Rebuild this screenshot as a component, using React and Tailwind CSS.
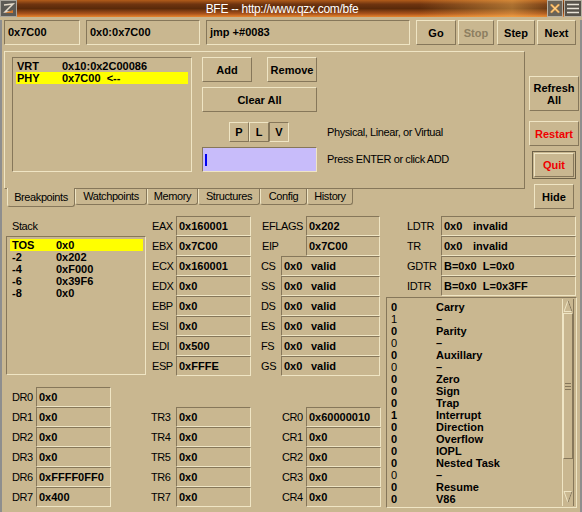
import React from 'react';

const sunken = 'border border-t-[#86775a] border-l-[#86775a] border-b-[#efe5c4] border-r-[#efe5c4]';
const raised = 'border border-t-[#efe5c4] border-l-[#efe5c4] border-b-[#86775a] border-r-[#86775a]';

const Btn = ({ className = '', children }) => (
    <div className={`${raised} flex items-center justify-center text-center font-bold text-[11px] leading-[12px] ${className}`}>
        {children}
    </div>
);

const RegRow = ({ label, value, extra, labelW, boxW, wide = 'w-[27px]' }) => (
    <div className="flex h-[20px] items-center">
        <span className={`${labelW} shrink-0 text-[11px] tracking-[-0.4px]`}>{label}</span>
        <div className={`${boxW} ${sunken} h-[20px] flex items-center pl-[2px] font-bold text-[11px] whitespace-pre`}>
            {extra ? <span className={wide}>{value}</span> : value}
            {extra && <span>{extra}</span>}
        </div>
    </div>
);

const stack = [
    ['TOS', '0x0'],
    ['-2', '0x202'],
    ['-4', '0xF000'],
    ['-6', '0x39F6'],
    ['-8', '0x0'],
];

const gprs = [
    ['EAX', '0x160001'],
    ['EBX', '0x7C00'],
    ['ECX', '0x160001'],
    ['EDX', '0x0'],
    ['EBP', '0x0'],
    ['ESI', '0x0'],
    ['EDI', '0x500'],
    ['ESP', '0xFFFE'],
];

const segs = ['CS', 'SS', 'DS', 'ES', 'FS', 'GS'];

const tables = [
    ['LDTR', '0x0', 'invalid'],
    ['TR', '0x0', 'invalid'],
    ['GDTR', 'B=0x0  L=0x0'],
    ['IDTR', 'B=0x0  L=0x3FF'],
];

// [value, name, reserved]
const flags = [
    ['0', 'Carry'],
    ['1', '–', true],
    ['0', 'Parity'],
    ['0', '–', true],
    ['0', 'Auxillary'],
    ['0', '–', true],
    ['0', 'Zero'],
    ['0', 'Sign'],
    ['0', 'Trap'],
    ['1', 'Interrupt'],
    ['0', 'Direction'],
    ['0', 'Overflow'],
    ['0', 'IOPL'],
    ['0', 'Nested Task'],
    ['0', '–', true],
    ['0', 'Resume'],
    ['0', 'V86'],
];

const drs = [
    ['DR0', '0x0'],
    ['DR1', '0x0'],
    ['DR2', '0x0'],
    ['DR3', '0x0'],
    ['DR6', '0xFFFF0FF0'],
    ['DR7', '0x400'],
];

const tabs = [
    ['Breakpoints', 'w-[68px]'],
    ['Watchpoints', 'w-[72px]'],
    ['Memory', 'w-[51px]'],
    ['Structures', 'w-[62px]'],
    ['Config', 'w-[47px]'],
    ['History', 'w-[46px]'],
];

const TitleBar = () => (
    <div className="flex h-[17px] w-[582px] bg-[linear-gradient(to_right,transparent_0%,transparent_72%,rgba(255,190,90,0.45)_88%,transparent_96%),linear-gradient(to_bottom,#b25c1a_0%,#6e3410_25%,#5a2a0a_50%,#a8521a_80%,#e8862e_100%)]">
        <svg width="17" height="17" viewBox="0 0 17 17" className="shrink-0">
            <rect x="0" y="0" width="17" height="17" fill="#5c5a55" />
            <rect x="0.5" y="0.5" width="16" height="16" fill="none" stroke="#a9a59c" />
            <path d="M4 5 L13 4 L5 12 L13 12" fill="none" stroke="#e6dccb" strokeWidth="1.5" />
            <path d="M5 13 L13 13 L13 10 Z" fill="#d2782c" />
        </svg>
        <div className="flex-1 flex items-center justify-center text-white text-[12px] leading-none tracking-[-0.3px]">
            BFE -- http://www.qzx.com/bfe
        </div>
        <svg width="16" height="17" viewBox="0 0 16 17" className="shrink-0">
            <rect x="0" y="0" width="16" height="17" fill="#6a6358" />
            <rect x="0.5" y="0.5" width="15" height="16" fill="none" stroke="#b7b0a2" />
            <path d="M4 4.5 L12 12.5 M12 4.5 L4 12.5" stroke="#f0a040" strokeWidth="2.2" />
            <path d="M4 4.5 L12 12.5 M12 4.5 L4 12.5" stroke="#fff0c0" strokeWidth="0.8" />
        </svg>
        <svg width="18" height="17" viewBox="0 0 18 17" className="shrink-0 ml-px">
            <rect x="0" y="0" width="18" height="17" fill="#57524a" />
            <rect x="0.5" y="0.5" width="17" height="16" fill="none" stroke="#b7b0a2" />
            <path d="M3 4.5 H15 M3 8.5 H15 M3 12.5 H15" stroke="#e8e2d6" strokeWidth="1.5" />
        </svg>
    </div>
);

const FlagsList = () => (
    <div className={`${sunken} mt-[1px] w-[191px] h-[211px] flex`}>
        <div className="flex-1 pt-[3px] pl-[4px]">
            {flags.map(([v, name, reserved], i) => (
                <div key={i} className="flex h-[12px] items-center text-[11px] leading-[12px]">
                    <span className={`w-[45px] ${reserved ? 'font-normal' : 'font-bold'}`}>{v}</span>
                    <span className="font-bold">{name}</span>
                </div>
            ))}
        </div>
        <div className="w-[12px] mr-[2px] my-px flex flex-col border-l border-l-[#efe5c4] border-r border-r-[#86775a]">
            <svg width="10" height="14" viewBox="0 0 10 14" className="shrink-0">
                <path d="M5 1.5 L9 12.5 L1 12.5 Z" fill="none" stroke="#efe5c4" />
                <path d="M5 1.5 L9 12.5" fill="none" stroke="#86775a" />
            </svg>
            <div className={`${raised} h-[146px] flex flex-col items-center justify-center gap-[2px]`}>
                <div className="w-[6px] h-px bg-[#86775a]" />
                <div className="w-[6px] h-px bg-[#86775a]" />
                <div className="w-[6px] h-px bg-[#86775a]" />
            </div>
            <div className="flex-1" />
            <svg width="10" height="14" viewBox="0 0 10 14" className="shrink-0 mb-[2px]">
                <path d="M1 1.5 L9 1.5 L5 12.5 Z" fill="none" stroke="#efe5c4" />
                <path d="M9 1.5 L5 12.5" fill="none" stroke="#86775a" />
            </svg>
        </div>
    </div>
);

const App = () => {
    return (
        <div className="w-[582px] h-[512px] overflow-hidden bg-[#c9b790] text-black font-['Liberation_Sans',Arial,sans-serif] leading-none">
            <TitleBar />
            <div className="h-[495px] border-l-2 border-r-2 border-b-2 border-l-[#8e8e8e] border-r-[#8e8e8e] border-b-[#8e8e8e] bg-[#c9b790]">
                {/* top row */}
                <div className="flex mt-[3px] h-[25px] text-[11px] font-bold">
                    <div className={`${sunken} ml-[2px] w-[76px] flex items-center pl-[3px]`}>0x7C00</div>
                    <div className={`${sunken} ml-[6px] w-[114px] flex items-center pl-[3px]`}>0x0:0x7C00</div>
                    <div className={`${sunken} ml-[6px] w-[204px] flex items-center pl-[3px]`}>jmp +#0083</div>
                    <Btn className="ml-[6px] w-[40px]">Go</Btn>
                    <Btn className="ml-[2px] w-[36px] text-[#8c7e60]">Stop</Btn>
                    <Btn className="ml-[3px] w-[38px]">Step</Btn>
                    <Btn className="ml-[2px] w-[39px]">Next</Btn>
                </div>

                {/* breakpoints panel + side buttons */}
                <div className="flex mt-[6px] items-start">
                    <div className="ml-[2px] w-[521px]">
                        <div className={`${raised} h-[138px] flex pl-[7px] pt-[5px]`}>
                            <div className={`${sunken} w-[180px] h-[115px] pt-[2px] px-[3px]`}>
                                <div className="flex h-[12px] items-center text-[11px] font-bold pl-px">
                                    <span className="w-[45px]">VRT</span>
                                    <span>0x10:0x2C00086</span>
                                </div>
                                <div className="flex h-[12px] items-center text-[11px] font-bold pl-px bg-[#ffff00] whitespace-pre">
                                    <span className="w-[45px]">PHY</span>
                                    <span>0x7C00  &lt;--</span>
                                </div>
                            </div>
                            <div className="ml-[10px] flex flex-col">
                                <div className="flex h-[25px]">
                                    <Btn className="w-[50px]">Add</Btn>
                                    <Btn className="ml-[15px] w-[50px]">Remove</Btn>
                                </div>
                                <Btn className="mt-[5px] w-[115px] h-[25px]">Clear All</Btn>
                                <div className="mt-[10px] flex items-center h-[20px]">
                                    <div className="w-[115px] pl-[27px] flex">
                                        <Btn className="w-[20px] h-[20px]">P</Btn>
                                        <Btn className="w-[20px] h-[20px]">L</Btn>
                                        <div className={`${sunken} w-[20px] h-[20px] flex items-center justify-center font-bold text-[11px]`}>V</div>
                                    </div>
                                    <span className="ml-[10px] text-[11px] tracking-[-0.4px]">Physical, Linear, or Virtual</span>
                                </div>
                                <div className="mt-[5px] flex items-center h-[25px]">
                                    <div className={`${sunken} w-[115px] h-[25px] bg-[#c8bcfa] flex items-center pl-[2px]`}>
                                        <div className="w-[2px] h-[12px] bg-[#0000f0]" />
                                    </div>
                                    <span className="ml-[10px] text-[11px] tracking-[-0.4px]">Press ENTER or click ADD</span>
                                </div>
                            </div>
                        </div>
                        <div className="flex h-[18px] pl-[3px] text-[11px] tracking-[-0.4px]">
                            {tabs.map(([name, w], i) => (
                                <div
                                    key={name}
                                    className={
                                        i === 0
                                            ? `${w} relative z-10 -mt-px h-[19px] bg-[#c9b790] border-l border-l-[#efe5c4] border-r border-r-[#86775a] border-b border-b-[#86775a] rounded-b-[3px] flex items-center justify-center`
                                            : `${w} h-[16px] border-l border-l-[#efe5c4] border-r border-r-[#86775a] border-b border-b-[#86775a] rounded-b-[3px] flex items-center justify-center`
                                    }
                                >
                                    {name}
                                </div>
                            ))}
                        </div>
                    </div>
                    <div className="ml-[4px] w-[50px] pt-[25px] flex flex-col">
                        <Btn className="h-[35px]">Refresh<br />All</Btn>
                        <Btn className="mt-[10px] h-[25px] text-[#f00000]">Restart</Btn>
                        <div className="mt-[5px] mx-[3px] h-[28px] border border-[#6e6248] p-px">
                            <Btn className="h-full text-[#f00000]">Quit</Btn>
                        </div>
                        <Btn className="mt-[5px] mx-[5px] h-[25px]">Hide</Btn>
                    </div>
                </div>

                {/* registers */}
                <div className="flex">
                    <div className="w-[384px] flex flex-col">
                        <div className="flex pt-[7px]">
                            <div className="ml-[4px] w-[140px]">
                                <div className="h-[20px] flex items-center pl-[6px] text-[11px] tracking-[-0.4px]">Stack</div>
                                <div className={`${sunken} h-[139px] pt-[2px] pl-[3px] pr-[2px]`}>
                                    {stack.map(([k, v], i) => (
                                        <div
                                            key={k}
                                            className={`flex h-[12px] items-center pl-[2px] text-[11px] font-bold ${i === 0 ? 'bg-[#ffff00]' : ''}`}
                                        >
                                            <span className="w-[44px]">{k}</span>
                                            <span>{v}</span>
                                        </div>
                                    ))}
                                </div>
                            </div>
                            <div className="ml-[6px]">
                                {gprs.map(([k, v]) => (
                                    <RegRow key={k} label={k} value={v} labelW="w-[24px]" boxW="w-[75px]" />
                                ))}
                            </div>
                            <div className="ml-[10px]">
                                <RegRow label="EFLAGS" value="0x202" labelW="w-[45px] pl-px" boxW="w-[74px]" />
                                <RegRow label="EIP" value="0x7C00" labelW="w-[45px] pl-px" boxW="w-[74px]" />
                                {segs.map((s) => (
                                    <RegRow key={s} label={s} value="0x0" extra="valid" labelW="w-[20px]" boxW="w-[99px]" />
                                ))}
                            </div>
                        </div>
                        <div className="flex mt-[11px]">
                            <div className="ml-[10px]">
                                {drs.map(([k, v]) => (
                                    <RegRow key={k} label={k} value={v} labelW="w-[24px]" boxW="w-[75px]" />
                                ))}
                            </div>
                            <div className="ml-[40px] pt-[20px]">
                                {[3, 4, 5, 6, 7].map((n) => (
                                    <RegRow key={n} label={`TR${n}`} value="0x0" labelW="w-[25px]" boxW="w-[75px]" />
                                ))}
                            </div>
                            <div className="ml-[31px] pt-[20px]">
                                {[0, 1, 2, 3, 4].map((n) => (
                                    <RegRow
                                        key={n}
                                        label={`CR${n}`}
                                        value={n === 0 ? '0x60000010' : '0x0'}
                                        labelW="w-[24px]"
                                        boxW="w-[75px]"
                                    />
                                ))}
                            </div>
                        </div>
                    </div>
                    <div className="w-[191px] flex flex-col pt-[7px]">
                        <div className="pl-[21px]">
                            {tables.map(([k, v, extra]) => (
                                <RegRow key={k} label={k} value={v} extra={extra} wide="w-[29px]" labelW="w-[34px]" boxW="w-[135px]" />
                            ))}
                        </div>
                        <FlagsList />
                    </div>
                </div>
            </div>
        </div>
    );
};

export default App;
